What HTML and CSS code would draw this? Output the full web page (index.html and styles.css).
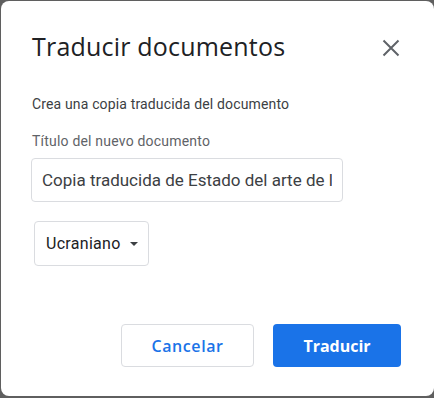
FILE: index.html
```html
<!DOCTYPE html>
<html lang="es">
<head>
    <meta charset="UTF-8">
    <meta name="viewport" content="width=device-width, initial-scale=1.0">
    <title>Traducir documentos</title>
    <link rel="stylesheet" href="styles.css">
</head>
<body>
    <div class="dialog">
        <div class="header">
            <h1>Traducir documentos</h1>
            <button class="close" type="button" aria-label="Cerrar">
                <svg width="24" height="24" viewBox="0 0 24 24">
                    <path d="M4.5 4.5 L19.5 19.5 M19.5 4.5 L4.5 19.5" stroke="#5f6368" stroke-width="2" fill="none"/>
                </svg>
            </button>
        </div>
        <p class="desc">Crea una copia traducida del documento</p>
        <label class="label" for="docTitle">Título del nuevo documento</label>
        <input id="docTitle" class="title-input" type="text" value="Copia traducida de Estado del arte de la inteligencia artificial">
        <button class="lang" type="button">
            <span>Ucraniano</span>
            <span class="caret"></span>
        </button>
        <div class="actions">
            <button class="btn btn-cancel" type="button">Cancelar</button>
            <button class="btn btn-primary" type="button">Traducir</button>
        </div>
    </div>
</body>
</html>
```

FILE: styles.css
```css
body {
    margin: 0;
    background: #5f5f5f;
    font-family: Roboto, Arial, sans-serif;
    height: 398px;
    overflow: hidden;
}
.dialog {
    margin: 1px 0 0 1px;
    width: 433px;
    height: 395px;
    box-sizing: border-box;
    padding: 29px 31px 0 31px;
    background: #fff;
    border-radius: 8px;
}
.header {
    display: flex;
    align-items: flex-start;
    justify-content: space-between;
}
.header h1 {
    margin: 0;
    font-family: "Open Sans", Roboto, sans-serif;
    font-size: 25px;
    letter-spacing: 0.2px;
    line-height: 32px;
    font-weight: 400;
    color: #202124;
}
.close {
    border: none;
    background: none;
    padding: 0;
    width: 24px;
    height: 24px;
    margin-top: 6px;
    cursor: pointer;
}
.desc {
    margin: 32px 0 0 0;
    font-size: 14px;
    letter-spacing: 0.15px;
    line-height: 20px;
    color: #3c4043;
}
.label {
    display: block;
    margin-top: 17px;
    font-size: 14px;
    letter-spacing: 0.2px;
    line-height: 20px;
    color: #5f6368;
}
.title-input {
    display: block;
    box-sizing: border-box;
    width: 312px;
    height: 44px;
    margin: 7px 0 0 -1px;
    padding: 0 10px;
    border: 1px solid #dadce0;
    border-radius: 4px;
    font-family: inherit;
    font-size: 17px;
    color: #3c4043;
    outline: none;
}
.lang {
    display: flex;
    align-items: center;
    box-sizing: border-box;
    width: 115px;
    height: 45px;
    margin: 19px 0 0 2px;
    padding: 0 11px;
    border: 1px solid #dadce0;
    border-radius: 4px;
    background: #fff;
    font-family: inherit;
    font-size: 16px;
    letter-spacing: 0.3px;
    color: #202124;
    cursor: pointer;
}
.caret {
    margin-left: 9px;
    width: 0;
    height: 0;
    border-left: 4px solid transparent;
    border-right: 4px solid transparent;
    border-top: 4px solid #3c4043;
}
.actions {
    display: flex;
    justify-content: flex-end;
    gap: 19px;
    margin-top: 58px;
    padding-right: 2px;
}
.btn {
    box-sizing: border-box;
    height: 43px;
    border-radius: 4px;
    font-family: "Open Sans", Roboto, sans-serif;
    font-size: 16px;
    cursor: pointer;
}
.btn-cancel {
    width: 133px;
    background: #fff;
    color: #1a73e8;
    border: 1px solid #dadce0;
    font-weight: 600;
    letter-spacing: 0.6px;
}
.btn-primary {
    width: 128px;
    background: #1a73e8;
    color: #fff;
    border: none;
    font-weight: 700;
}
```
